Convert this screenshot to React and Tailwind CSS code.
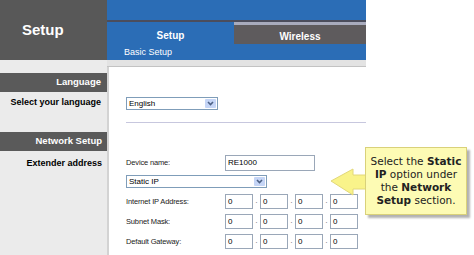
import React from "react";

// Linksys-style setup page with a tooltip callout

function SelectBox({ value, width }) {
  return (
    <div
      className="flex h-[13px] items-center border border-[#7f9db9] bg-white"
      style={{ width }}
    >
      <span className="flex-1 pl-[2px] text-[8px] leading-none text-black">{value}</span>
      <div className="m-[1px] flex h-[9px] w-[11px] items-center justify-center rounded-[1px] bg-[#c5d5f6]">
        <svg width="7" height="5" viewBox="0 0 7 5">
          <path d="M1 1l2.5 2.5L6 1" fill="none" stroke="#4d6185" strokeWidth="1.6" />
        </svg>
      </div>
    </div>
  );
}

function Box({ value, w = 28, h = 15 }) {
  return (
    <div
      className="flex items-center border border-[#9aa7b8] bg-white pl-[2px] text-[8px] leading-none text-black"
      style={{ width: w, height: h }}
    >
      {value}
    </div>
  );
}

function IpRow({ label }) {
  return (
    <div className="flex items-center">
      <div className="w-[99px] text-[7.5px] tracking-[-0.15px] text-[#222]">{label}</div>
      <Box value="0" />
      <span className="w-[7px] text-center text-[7px] text-[#444]">.</span>
      <Box value="0" />
      <span className="w-[7px] text-center text-[7px] text-[#444]">.</span>
      <Box value="0" />
      <span className="w-[7px] text-center text-[7px] text-[#444]">.</span>
      <Box value="0" />
    </div>
  );
}

export default function App() {
  return (
    <div className="relative h-[255px] w-[474px] overflow-hidden bg-white font-['Liberation_Sans',Arial,sans-serif]">
      {/* header */}
      <div className="flex h-[60px]">
        <div className="flex w-[107px] items-center pl-[22px] pt-[1px] text-[15px] font-bold text-white bg-[#585858]">
          Setup
        </div>
        <div className="flex w-[259px] flex-col bg-[#2b6db6]">
          <div className="h-[20px]" />
          <div className="h-[2px] bg-[#4b4d5c]" />
          <div className="flex h-[22px]">
            <div className="flex w-[127px] items-center justify-center pt-[5px] text-[10px] font-bold text-white">
              Setup
            </div>
            <div className="flex flex-1 flex-col">
              <div className="h-[3px] bg-[#a8abbd]" />
              <div className="flex flex-1 items-center justify-center pt-[3px] text-[10px] font-bold text-white bg-[#5e5b5d]">
                Wireless
              </div>
            </div>
          </div>
          <div className="flex flex-1 items-center pl-[17px] pt-[2px] text-[9px] text-white">Basic Setup</div>
        </div>
      </div>

      {/* body */}
      <div className="flex h-[195px]">
        <div className="flex w-[107px] flex-col bg-[#ebebeb] pt-[13px]">
          <div className="flex h-[19px] items-center justify-end bg-[#5a5a5a] pr-[6px] text-[9.5px] font-bold text-white">
            Language
          </div>
          <div className="flex h-[22px] items-center justify-end pr-[6px] text-[9px] font-bold text-black">
            Select your language
          </div>
          <div className="mt-[18px] flex h-[19px] items-center justify-end bg-[#5a5a5a] pr-[5px] text-[9.5px] font-bold text-white">
            Network Setup
          </div>
          <div className="flex h-[26px] items-center justify-end pr-[5px] text-[9px] font-bold text-black">
            Extender address
          </div>
        </div>

        <div className="flex w-[259px] flex-col">
          <div className="h-[7px] border-b border-[#c3c3c3] bg-[#e3e3e3]" />
          <div className="flex-1 border-l-2 border-[#d3d3d3] bg-white pl-[17px]">
            <div className="mt-[30px]">
              <SelectBox value="English" width={92} />
            </div>
            <div className="mt-[12px] h-[1px] bg-[#c7c7de]" />
            <div className="mt-[32px] flex items-center">
              <div className="w-[99px] text-[7.5px] tracking-[-0.15px] text-[#222]">Device name:</div>
              <Box value="RE1000" w={90} h={16} />
            </div>
            <div className="mt-[4px]">
              <SelectBox value="Static IP" width={141} />
            </div>
            <div className="mt-[6px] flex flex-col gap-[5px]">
              <IpRow label="Internet IP  Address:" />
              <IpRow label="Subnet Mask:" />
              <IpRow label="Default Gateway:" />
            </div>
          </div>
        </div>
      </div>

      {/* callout */}
      <svg className="absolute left-[330px] top-[166px]" width="38" height="31" viewBox="0 0 38 31">
        <polygon
          points="1,15 23,3 23,9 37,9 37,23 23,23 23,29"
          fill="#f9f38a"
          stroke="#e2d87a"
          strokeWidth="1"
        />
      </svg>
      <div className="absolute left-[365px] top-[147px] h-[68px] w-[102px] border border-[#d9d17a] bg-[#fdfbb4] pt-[7px] text-center font-['DejaVu_Sans',Verdana,sans-serif] text-[10.5px] leading-[13px] text-[#222] shadow-[3px_3px_2px_rgba(0,0,0,0.3)]">
        Select the <b>Static</b>
        <br />
        <b>IP</b> option under
        <br />
        the <b>Network</b>
        <br />
        <b>Setup</b> section.
      </div>
    </div>
  );
}
